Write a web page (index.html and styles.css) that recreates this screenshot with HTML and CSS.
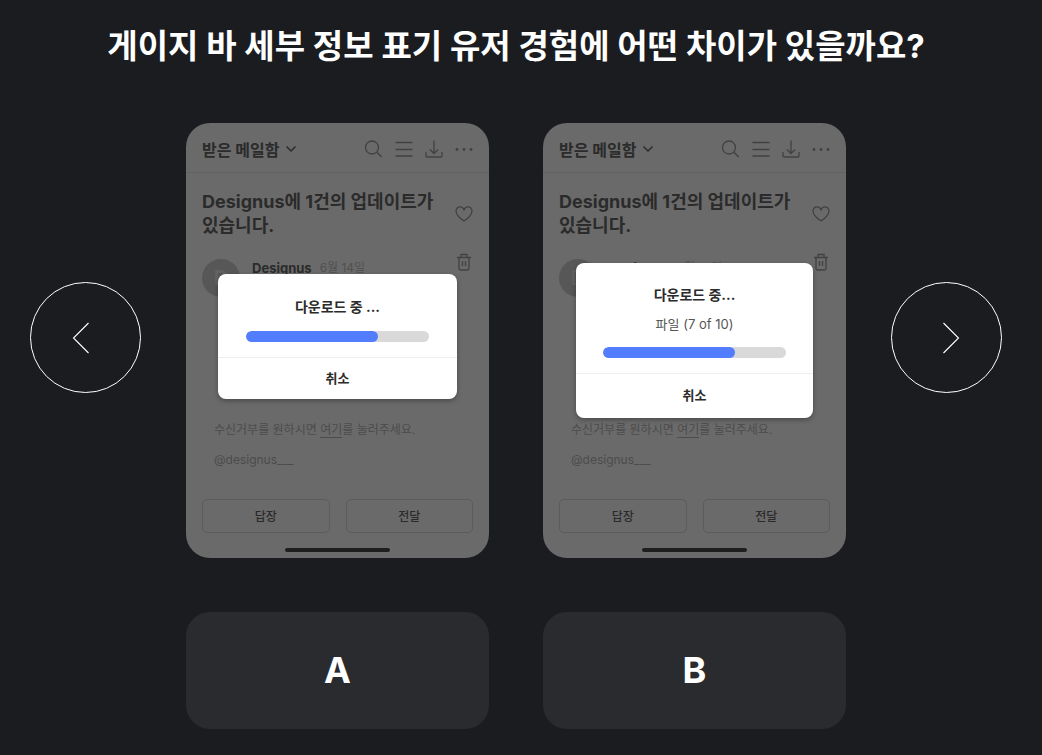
FILE: index.html
```html
<!DOCTYPE html>
<html lang="ko">

<head>
    <meta charset="UTF-8">
    <meta name="viewport" content="width=device-width, initial-scale=1.0">
    <title>게이지 바 세부 정보 표기</title>
    <link rel="stylesheet" href="styles.css">
</head>

<body>
    <!-- shared icons -->
    <svg class="sprite" aria-hidden="true">
        <symbol id="down" viewBox="0 0 12 8"><path d="M1.500 1.500 6 6l4.500-4.500" /></symbol>
        <symbol id="search" viewBox="0 0 18 18"><circle cx="7" cy="7.500" r="6.500" /><path d="m11.800 12.300 4.900 4.700" /></symbol>
        <symbol id="list" viewBox="0 0 18 18"><path d="M.5 2.500h17M.5 9.500h17M.5 16h17" /></symbol>
        <symbol id="save" viewBox="0 0 18 18"><path d="M9 .5v13M5 9.500l4 4 4-4M1 12v4q0 1 1 1h14q1 0 1-1v-4" /></symbol>
        <symbol id="more" viewBox="0 0 18 18"><g class="dots"><circle cx="2" cy="9.500" r="1.400" /><circle cx="9" cy="9.500" r="1.400" /><circle cx="16" cy="9.500" r="1.400" /></g></symbol>
        <symbol id="heart" viewBox="0 0 18 18"><path d="M9 15.800C7 14.800 1 10.700 1 6.300 1 3.600 2.900 1.800 5 1.800c1.900 0 3.300 1.200 4 2.900.7-1.700 2.100-2.900 4-2.900 2.100 0 4 1.800 4 4.500 0 4.400-6 8.500-8 9.500z" /></symbol>
        <symbol id="trash" viewBox="0 0 18 18"><path d="M2 4.500h14M6 4.500V1.500h6v3M4 4.500v11q0 1.500 1.500 1.500h7q1.500 0 1.500-1.500v-11M7.500 8v5M10.500 8v5" /></symbol>
    </svg>

    <main>
        <h1>게이지 바 세부 정보 표기 유저 경험에 어떤 차이가 있을까요?</h1>

        <div class="stage">
            <button class="nav prev" aria-label="이전">
                <svg viewBox="0 0 18 32"><path d="M16.500 1 1.500 16l15 15" /></svg>
            </button>

            <div class="pair">
                <section class="phone">
                    <header class="topbar">
                        <button class="mailbox">받은 메일함 <svg><use href="#down" /></svg></button>
                        <div class="tools">
                            <button class="icon" aria-label="검색"><svg><use href="#search" /></svg></button>
                            <button class="icon" aria-label="목록"><svg><use href="#list" /></svg></button>
                            <button class="icon" aria-label="저장"><svg><use href="#save" /></svg></button>
                            <button class="icon" aria-label="더보기"><svg><use href="#more" /></svg></button>
                        </div>
                    </header>
                    <div class="subject">
                        <h2>Designus에 1건의 업데이트가 있습니다.</h2>
                        <button class="icon" aria-label="좋아요"><svg><use href="#heart" /></svg></button>
                    </div>
                    <div class="sender">
                        <span class="avatar">D</span>
                        <b>Designus</b>
                        <span class="date">6월 14일</span>
                        <button class="icon" aria-label="삭제"><svg><use href="#trash" /></svg></button>
                    </div>
                    <div class="footnote">
                        <p>수신거부를 원하시면 <a href="#">여기</a>를 눌러주세요.</p>
                        <p>@designus___</p>
                    </div>
                    <div class="actions">
                        <button>답장</button>
                        <button>전달</button>
                    </div>
                    <div class="home"></div>

                    <div class="dialog simple">
                        <div class="dialog_body">
                            <label for="gaugeA">다운로드 중 ...</label>
                            <progress id="gaugeA" value="72" max="100"></progress>
                        </div>
                        <button>취소</button>
                    </div>
                </section>

                <section class="phone">
                    <header class="topbar">
                        <button class="mailbox">받은 메일함 <svg><use href="#down" /></svg></button>
                        <div class="tools">
                            <button class="icon" aria-label="검색"><svg><use href="#search" /></svg></button>
                            <button class="icon" aria-label="목록"><svg><use href="#list" /></svg></button>
                            <button class="icon" aria-label="저장"><svg><use href="#save" /></svg></button>
                            <button class="icon" aria-label="더보기"><svg><use href="#more" /></svg></button>
                        </div>
                    </header>
                    <div class="subject">
                        <h2>Designus에 1건의 업데이트가 있습니다.</h2>
                        <button class="icon" aria-label="좋아요"><svg><use href="#heart" /></svg></button>
                    </div>
                    <div class="sender">
                        <span class="avatar">D</span>
                        <b>Designus</b>
                        <span class="date">6월 14일</span>
                        <button class="icon" aria-label="삭제"><svg><use href="#trash" /></svg></button>
                    </div>
                    <div class="footnote">
                        <p>수신거부를 원하시면 <a href="#">여기</a>를 눌러주세요.</p>
                        <p>@designus___</p>
                    </div>
                    <div class="actions">
                        <button>답장</button>
                        <button>전달</button>
                    </div>
                    <div class="home"></div>

                    <div class="dialog detailed">
                        <div class="dialog_body">
                            <label for="gaugeB">다운로드 중...</label>
                            <span class="files">파일 (7 of 10)</span>
                            <progress id="gaugeB" value="72" max="100"></progress>
                        </div>
                        <button>취소</button>
                    </div>
                </section>
            </div>

            <button class="nav next" aria-label="다음">
                <svg viewBox="0 0 18 32"><path d="m1.500 1 15 15-15 15" /></svg>
            </button>
        </div>

        <div class="pair answers">
            <button>A</button>
            <button>B</button>
        </div>
    </main>
</body>

</html>
```

FILE: styles.css
```css
* {
    box-sizing: border-box;
}

body {
    margin: 0;
    background-color: #1b1c1f;
    font-family: Inter, "Noto Sans CJK KR", sans-serif;
}

main {
    padding: 20px 40px 26px 30px;
}

h1, h2, p {
    margin: 0;
}

button {
    padding: 0;
    border: 0;
    background: none;
    color: inherit;
    font-family: inherit;
    cursor: pointer;
}

svg {
    display: block;
    fill: none;
    stroke: currentColor;
}

.sprite {
    position: absolute;
    width: 0;
    height: 0;
}

.dots {
    fill: currentColor;
    stroke: none;
}

h1 {
    margin-bottom: 51px;
    color: white;
    font-size: 33px;
    line-height: 52px;
    text-align: center;
    white-space: nowrap;
}

.stage {
    display: flex;
    align-items: center;
    gap: 45px;
}

.nav {
    flex: none;
    display: grid;
    place-items: center;
    width: 111px;
    height: 111px;
    margin-bottom: 6px;
    border: 1px solid white;
    border-radius: 50%;
    color: white;
}

.prev {
    padding-right: 10px;
}

.next {
    padding-left: 8px;
}

.nav svg {
    width: 18px;
    height: 32px;
    stroke-width: 1.1;
}

.pair {
    flex: 1;
    display: grid;
    grid-template-columns: 1fr 1fr;
    gap: 54px;
}

/* mail app screen */
.phone {
    position: relative;
    display: flex;
    flex-direction: column;
    padding-bottom: 6px;
    border-radius: 24px;
    background-color: #6a6a6a;
    color: #2b2b2b;
    overflow: hidden;
}

.topbar {
    display: flex;
    align-items: center;
    justify-content: space-between;
    height: 50px;
    padding: 2px 16px 0;
    border-bottom: 1px solid #616161;
}

.mailbox {
    display: flex;
    align-items: center;
    gap: 6px;
    font-size: 16px;
    font-weight: bold;
}

.mailbox svg {
    width: 12px;
    height: 8px;
    stroke-width: 1.5;
}

.tools {
    display: flex;
    gap: 12px;
}

.icon {
    flex: none;
    color: #414141;
}

.icon svg {
    width: 18px;
    height: 18px;
    stroke-width: 1.3;
}

.subject {
    display: flex;
    align-items: center;
    justify-content: space-between;
    padding: 17px 16px 0;
}

h2 {
    font-size: 18px;
    line-height: 24px;
    word-break: keep-all;
}

.sender {
    display: flex;
    align-items: flex-start;
    gap: 8px;
    padding: 21px 16px 0;
    font-size: 13px;
    line-height: 18px;
}

.avatar {
    width: 38px;
    height: 38px;
    margin-right: 4px;
    border-radius: 50%;
    background-color: #575757;
    color: #626262;
    font-size: 20px;
    font-weight: bold;
    line-height: 38px;
    text-align: center;
}

.date {
    color: #505050;
    font-size: 12px;
}

.sender .icon {
    margin: -6px 0 0 auto;
}

.footnote {
    display: flex;
    flex-direction: column;
    gap: 12px;
    margin-top: 124px;
    padding: 0 28px;
    color: #4c4c4c;
    font-size: 12px;
    line-height: 18px;
}

.footnote a {
    color: inherit;
    text-underline-offset: 3px;
}

.actions {
    display: grid;
    grid-template-columns: 1fr 1fr;
    gap: 16px;
    padding: 30px 16px 15px;
}

.actions button {
    height: 34px;
    padding-bottom: 2px;
    border: 1px solid #5c5c5c;
    border-radius: 5px;
    font-size: 12px;
    font-weight: 500;
}

.home {
    width: 105px;
    height: 4px;
    margin: 0 auto;
    border-radius: 2px;
    background-color: #1e1e1e;
}

/* download popup */
.dialog {
    position: absolute;
    border-radius: 8px;
    background-color: white;
    box-shadow: 0 2px 5px rgba(0, 0, 0, 0.3);
    color: #2b2b2b;
}

.simple {
    top: 151px;
    left: 32px;
    right: 32px;
}

.detailed {
    top: 140px;
    left: 33px;
    right: 33px;
}

.dialog_body {
    display: flex;
    flex-direction: column;
    padding: 22px 28px 15px;
    border-bottom: 1px solid #eee;
    text-align: center;
}

.detailed .dialog_body {
    padding: 21px 27px 15px;
}

.dialog label {
    font-size: 14px;
    font-weight: bold;
    line-height: 22px;
}

.files {
    margin-top: 8px;
    color: #555;
    font-size: 13px;
    line-height: 20px;
}

progress {
    appearance: none;
    width: 100%;
    height: 11px;
    margin-top: 13px;
    border-radius: 6px;
    overflow: hidden;
}

progress::-webkit-progress-bar {
    background-color: #d9d9d9;
}

progress::-webkit-progress-value {
    border-radius: 6px;
    background-color: #527dff;
}

.dialog button {
    display: block;
    width: 100%;
    height: 41px;
    padding-bottom: 3px;
    font-size: 13px;
    font-weight: bold;
}

.detailed button {
    height: 44px;
}

.answers {
    margin: 54px 156px 0;
}

.answers button {
    height: 117px;
    padding-bottom: 2px;
    border-radius: 24px;
    background-color: #2a2b2f;
    color: white;
    font-size: 36px;
    font-weight: bold;
}
```
